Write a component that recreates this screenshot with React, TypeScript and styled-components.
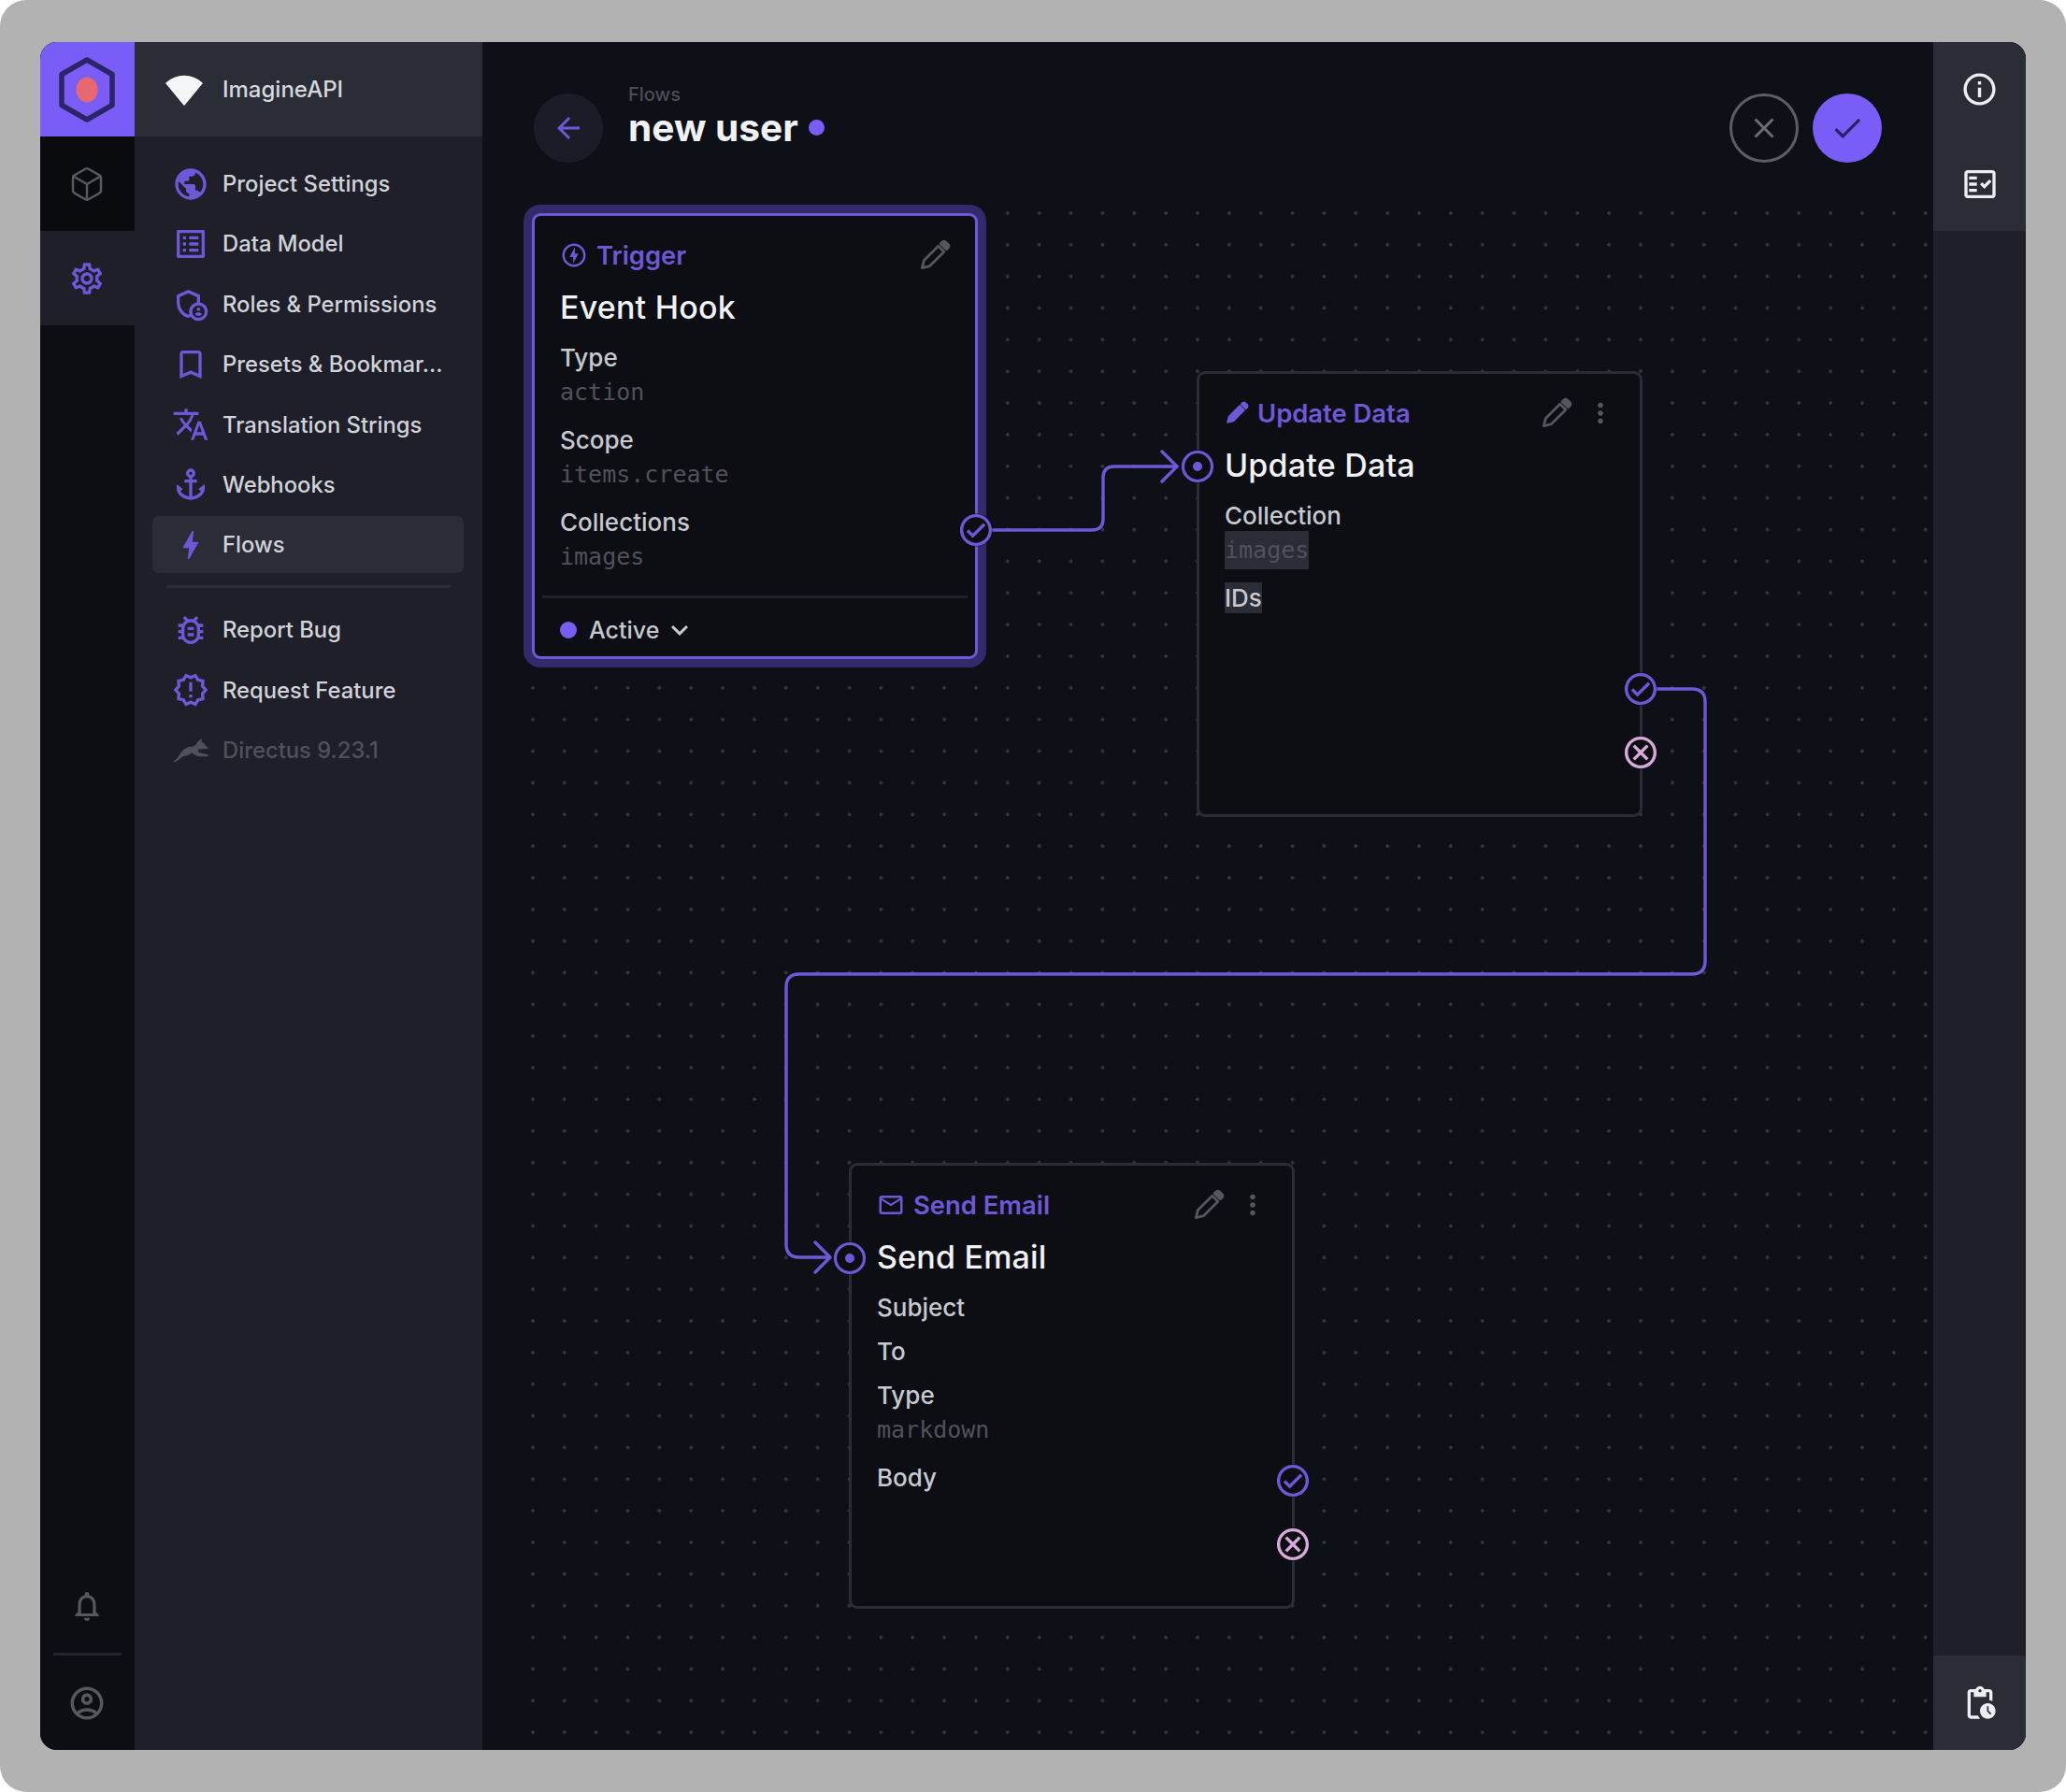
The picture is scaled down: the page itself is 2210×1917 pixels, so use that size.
import React from 'react'
import styled, { createGlobalStyle } from 'styled-components'
import {
  MdPublic,
  MdListAlt,
  MdOutlineAdminPanelSettings,
  MdOutlineBookmarkBorder,
  MdTranslate,
  MdAnchor,
  MdBolt,
  MdOutlineBugReport,
  MdOutlineNewReleases,
  MdOutlineSettings,
  MdOutlineNotifications,
  MdOutlineAccountCircle,
  MdArrowBack,
  MdClose,
  MdCheck,
  MdInfoOutline,
  MdOutlineFactCheck,
  MdOutlinePendingActions,
  MdMoreVert,
  MdOutlineEmail,
  MdOutlineOfflineBolt,
  MdKeyboardArrowDown,
  MdOutlineCheckCircle,
  MdOutlineCancel,
} from 'react-icons/md'
import { Box } from 'lucide-react'

const PURPLE = '#6f58d8'
const BRIGHT = '#7a5cf6'
const PANEL = '#1e1f29'
const RAISED = '#2a2c36'
const CANVAS = '#0d1017'
const CARD = '#0c0e14'

const GlobalStyle = createGlobalStyle`
  html, body { margin: 0; padding: 0; background: #fff; }
  body { font-family: Inter, "Liberation Sans", sans-serif; }
  * { box-sizing: border-box; }
`

const Backdrop = styled.div`
  width: 2210px;
  height: 1917px;
  padding: 45px 43px 45px 43px;
  background: #b2b2b2;
  border-radius: 28px;
`

const Frame = styled.div`
  display: flex;
  height: 100%;
  border-radius: 18px;
  overflow: hidden;
  background: ${CANVAS};
`

const Rail = styled.div`
  width: 101px;
  flex: none;
  display: flex;
  flex-direction: column;
  background: #0c0e13;
`

const LogoTile = styled.div`
  height: 101px;
  display: flex;
  align-items: center;
  justify-content: center;
  padding-right: 2px;
  background: ${BRIGHT};
`

const RailItem = styled.div<{ $active?: boolean; $dim?: boolean }>`
  height: 101px;
  display: flex;
  align-items: center;
  justify-content: center;
  padding-right: 2px;
  background: ${(p) => (p.$active ? PANEL : p.$dim ? '#090b0f' : 'transparent')};
  color: ${(p) => (p.$active ? PURPLE : '#56585f')};
  svg { display: block; }
`

const RailSpacer = styled.div`
  flex: 1;
`

const RailRule = styled.div`
  height: 3px;
  margin: 0 14px;
  background: #23252e;
`

const Sidebar = styled.div`
  width: 372px;
  flex: none;
  background: ${PANEL};
`

const ProjectBar = styled.div`
  height: 101px;
  display: flex;
  align-items: center;
  gap: 21px;
  padding-left: 33px;
  background: ${RAISED};
  color: #d5d8df;
  font-size: 24px;
  font-weight: 500;
`

const NavList = styled.div`
  display: flex;
  flex-direction: column;
  gap: 3.4px;
  padding: 20px 20px 0 19px;
`

const NavItem = styled.div<{ $active?: boolean; $muted?: boolean }>`
  height: 61px;
  display: flex;
  align-items: center;
  gap: 14px;
  padding-left: 21px;
  border-radius: 7px;
  background: ${(p) => (p.$active ? RAISED : 'transparent')};
  color: ${(p) => (p.$muted ? '#4f515a' : '#d0d3da')};
  font-size: 23.8px;
  font-weight: 500;
  white-space: nowrap;
  svg { flex: none; width: 40px; height: 40px; color: ${(p) => (p.$muted ? '#4f515a' : PURPLE)}; }
`

const NavRule = styled.div`
  height: 3px;
  margin: 9px 14px 11px 15px;
  background: ${RAISED};
`

const Main = styled.div`
  flex: 1;
  min-width: 0;
  display: flex;
  flex-direction: column;
`

const Header = styled.div`
  height: 160px;
  flex: none;
  display: flex;
  align-items: flex-start;
  padding: 55px 55px 0;
`

const BackButton = styled.div`
  width: 74px;
  height: 74px;
  border-radius: 50%;
  display: flex;
  align-items: center;
  justify-content: center;
  background: #1b1c28;
  color: ${PURPLE};
`

const TitleBlock = styled.div`
  margin: -11px 0 0 27px;
  flex: 1;
`

const Crumb = styled.div`
  height: 24px;
  line-height: 24px;
  font-size: 20px;
  font-weight: 500;
  color: #4b4d56;
`

const Title = styled.div`
  height: 46px;
  display: flex;
  align-items: center;
  gap: 11px;
  font-size: 40.6px;
  font-weight: 700;
  color: #f1f2f5;
`

const TitleDot = styled.span`
  width: 17px;
  height: 17px;
  border-radius: 50%;
  background: ${BRIGHT};
`

const RoundButton = styled.div<{ $primary?: boolean }>`
  width: 74px;
  height: 74px;
  margin-left: 15px;
  border-radius: 50%;
  display: flex;
  align-items: center;
  justify-content: center;
  border: ${(p) => (p.$primary ? 'none' : '3px solid #5c5e66')};
  background: ${(p) => (p.$primary ? BRIGHT : 'transparent')};
  color: ${(p) => (p.$primary ? '#2a2260' : '#6b6d75')};
`

const Canvas = styled.div`
  position: relative;
  flex: 1;
  margin-left: 40px;
  background-image: radial-gradient(circle, #363841 1.5px, transparent 2px);
  background-size: 33.87px 33.87px;
  background-position: -3px 6px;
`

const Wires = styled.svg`
  position: absolute;
  left: 0;
  top: 0;
  width: 100%;
  height: 100%;
  overflow: visible;
  fill: none;
  stroke: ${PURPLE};
  stroke-width: 3.4;
  stroke-linecap: round;
  stroke-linejoin: round;
`

const Node = styled.div<{ $x: number; $y: number; $selected?: boolean }>`
  position: absolute;
  left: ${(p) => p.$x}px;
  top: ${(p) => p.$y}px;
  width: 477px;
  height: 477px;
  display: flex;
  flex-direction: column;
  padding: 8px 0 0;
  border: 3px solid ${(p) => (p.$selected ? PURPLE : RAISED)};
  border-radius: 9px;
  background: ${CARD};
  box-shadow: ${(p) => (p.$selected ? '0 0 0 9px #322a6b' : 'none')};
`

const NodeHead = styled.div`
  height: 68px;
  flex: none;
  display: flex;
  align-items: center;
  padding: 0 18px 0 27px;
`

const NodeKind = styled.div`
  flex: 1;
  display: flex;
  align-items: center;
  gap: 9px;
  color: ${PURPLE};
  font-size: 27.4px;
  font-weight: 600;
`

const HeadAction = styled.div<{ $nudge?: number }>`
  width: 48px;
  height: 48px;
  margin-right: ${(p) => p.$nudge || 0}px;
  display: flex;
  align-items: center;
  justify-content: center;
  color: #55575f;
`

const NodeName = styled.div`
  height: 44px;
  line-height: 44px;
  margin-bottom: 15px;
  padding-left: 27px;
  color: #f1f2f5;
  font-size: 34px;
  font-weight: 500;
  letter-spacing: 0.2px;
`

const Fields = styled.div`
  display: flex;
  flex-direction: column;
  gap: 14px;
  padding-left: 27px;
  align-items: flex-start;
`

const Field = styled.div`
  display: flex;
  flex-direction: column;
  align-items: flex-start;
`

const Label = styled.div<{ $shaded?: boolean }>`
  height: 33px;
  line-height: 33px;
  color: #c6c9d0;
  font-size: 26px;
  font-weight: 500;
  background: ${(p) => (p.$shaded ? RAISED : 'transparent')};
`

const Value = styled.div<{ $shaded?: boolean }>`
  height: 41px;
  line-height: 41px;
  color: #50525b;
  font-family: "DejaVu Sans Mono", "Liberation Mono", monospace;
  font-size: 25px;
  background: ${(p) => (p.$shaded ? RAISED : 'transparent')};
`

const StatusBar = styled.div`
  margin: auto 8px 0;
  height: 65px;
  display: flex;
  align-items: center;
  gap: 4px;
  padding: 6px 0 0 19px;
  border-top: 3px solid #1f2029;
  color: #c6c9d0;
  font-size: 25px;
  font-weight: 500;
`

const StatusDot = styled.span`
  width: 18px;
  height: 18px;
  margin-right: 9px;
  border-radius: 50%;
  background: ${BRIGHT};
`

const Port = styled.div<{ $side: 'left' | 'right'; $top: number; $color?: string }>`
  position: absolute;
  left: ${(p) => (p.$side === 'left' ? '-2px' : 'calc(100% + 1px)')};
  top: ${(p) => p.$top}px;
  transform: translate(-50%, -50%);
  width: 35px;
  height: 35px;
  display: flex;
  align-items: center;
  justify-content: center;
  border-radius: 50%;
  background: ${CARD};
  color: ${(p) => p.$color || PURPLE};
  svg { flex: none; }
`

const Aside = styled.div`
  width: 99px;
  flex: none;
  display: flex;
  flex-direction: column;
  background: ${PANEL};
`

const AsideItem = styled.div`
  height: 101px;
  display: flex;
  align-items: center;
  justify-content: center;
  background: ${RAISED};
  color: #eceef2;
`

const AsideSpacer = styled.div`
  flex: 1;
`

function Logo() {
  return (
    <svg width="66" height="72" viewBox="0 0 66 72">
      <path
        d="M33 4 L60 19.5 V52.5 L33 68 L6 52.5 V19.5 Z"
        fill="none"
        stroke="#2c2468"
        strokeWidth="5.5"
        strokeLinejoin="round"
      />
      <ellipse cx="33" cy="36" rx="11.5" ry="13.5" fill="#e8686f" />
    </svg>
  )
}

function WifiMark() {
  return (
    <svg width="40" height="34" viewBox="0 0 40 34">
      <path d="M1 10 C12 0 28 0 39 10 L20 33 Z" fill="#f4f5f7" stroke="#f4f5f7" strokeWidth="1.5" strokeLinejoin="round" />
    </svg>
  )
}

function Pencil({ solid, size = 35 }: { solid?: boolean; size?: number }) {
  return (
    <svg width={size} height={size} viewBox="0 0 24 24" fill={solid ? 'currentColor' : 'none'} stroke="currentColor" strokeWidth="1.9" strokeLinejoin="round">
      <path d="M3 21 L4.4 15.4 L14.9 4.9 L19.1 9.1 L8.6 19.6 Z" />
      <path d="M16.6 3.2 L18 1.8 A1.4 1.4 0 0 1 20 1.8 L22.2 4 A1.4 1.4 0 0 1 22.2 6 L20.8 7.4 Z" fill="currentColor" />
    </svg>
  )
}

function InputRing() {
  return (
    <svg width="35" height="35" viewBox="0 0 35 35" fill="none">
      <circle cx="17.5" cy="17.5" r="15.5" stroke="currentColor" strokeWidth="3.2" />
      <circle cx="17.5" cy="17.5" r="5" fill="currentColor" />
    </svg>
  )
}

function Rabbit() {
  return (
    <svg viewBox="0 0 42 30" style={{ width: 40, height: 29 }}>
      <path
        d="M1 29 C5 26 8 21 10 18 C13 13 18 11 23 11 L27 9 C28 6 30 4 34 2 L33 6 C35 6 37 8 38 10 L41 13 L34 14 L30 14 C29 16 29 17 31 18 L41 20 L40 22 L29 22 C26 21 24 19 22 18 C19 21 15 22 12 22 C9 25 5 28 1 29 Z"
        fill="currentColor"
      />
    </svg>
  )
}

const navTop = [
  { label: 'Project Settings', icon: <MdPublic /> },
  { label: 'Data Model', icon: <MdListAlt /> },
  { label: 'Roles & Permissions', icon: <MdOutlineAdminPanelSettings /> },
  { label: 'Presets & Bookmar...', icon: <MdOutlineBookmarkBorder /> },
  { label: 'Translation Strings', icon: <MdTranslate /> },
  { label: 'Webhooks', icon: <MdAnchor /> },
]

export default function App() {
  return (
    <>
      <GlobalStyle />
      <Backdrop>
        <Frame>
          <Rail>
            <LogoTile>
              <Logo />
            </LogoTile>
            <RailItem $dim>
              <Box size={40} strokeWidth={1.5} />
            </RailItem>
            <RailItem $active>
              <MdOutlineSettings size={40} />
            </RailItem>
            <RailSpacer />
            <RailItem>
              <MdOutlineNotifications size={38} />
            </RailItem>
            <RailRule />
            <RailItem>
              <MdOutlineAccountCircle size={42} />
            </RailItem>
          </Rail>

          <Sidebar>
            <ProjectBar>
              <WifiMark />
              ImagineAPI
            </ProjectBar>
            <NavList>
              {navTop.map((item) => (
                <NavItem key={item.label}>
                  {item.icon}
                  {item.label}
                </NavItem>
              ))}
              <NavItem $active>
                <MdBolt />
                Flows
              </NavItem>
              <NavRule />
              <NavItem>
                <MdOutlineBugReport />
                Report Bug
              </NavItem>
              <NavItem>
                <MdOutlineNewReleases />
                Request Feature
              </NavItem>
              <NavItem $muted>
                <Rabbit />
                Directus 9.23.1
              </NavItem>
            </NavList>
          </Sidebar>

          <Main>
            <Header>
              <BackButton>
                <MdArrowBack size={36} />
              </BackButton>
              <TitleBlock>
                <Crumb>Flows</Crumb>
                <Title>
                  new user
                  <TitleDot />
                </Title>
              </TitleBlock>
              <RoundButton>
                <MdClose size={36} />
              </RoundButton>
              <RoundButton $primary>
                <MdCheck size={38} />
              </RoundButton>
            </Header>

            <Canvas>
              <Wires>
                <g transform="translate(-556 -205)">
                  <path d="M1044 567 H1168 Q1180 567 1180 555 V511 Q1180 499 1192 499 H1259" />
                  <path d="M1243 483 L1259 499 L1243 515" />
                  <path d="M1756 737 H1810 Q1824 737 1824 751 V1028 Q1824 1042 1810 1042 H855 Q841 1042 841 1056 V1331 Q841 1345 855 1345 H886" />
                  <path d="M872 1329 L888 1345 L872 1361" />
                </g>
              </Wires>

              <Node $x={13} $y={23} $selected>
                <NodeHead>
                  <NodeKind>
                    <MdOutlineOfflineBolt size={30} />
                    Trigger
                  </NodeKind>
                  <HeadAction $nudge={2}>
                    <Pencil />
                  </HeadAction>
                </NodeHead>
                <NodeName>Event Hook</NodeName>
                <Fields>
                  <Field>
                    <Label>Type</Label>
                    <Value>action</Value>
                  </Field>
                  <Field>
                    <Label>Scope</Label>
                    <Value>items.create</Value>
                  </Field>
                  <Field>
                    <Label>Collections</Label>
                    <Value>images</Value>
                  </Field>
                </Fields>
                <StatusBar>
                  <StatusDot />
                  Active
                  <MdKeyboardArrowDown size={36} color="#c6c9d0" />
                </StatusBar>
                <Port $side="right" $top={336}>
                  <MdOutlineCheckCircle size={41} />
                </Port>
              </Node>

              <Node $x={724} $y={192}>
                <NodeHead>
                  <NodeKind>
                    <Pencil solid size={26} />
                    Update Data
                  </NodeKind>
                  <HeadAction>
                    <Pencil />
                  </HeadAction>
                  <HeadAction>
                    <MdMoreVert size={34} />
                  </HeadAction>
                </NodeHead>
                <NodeName>Update Data</NodeName>
                <Fields>
                  <Field>
                    <Label>Collection</Label>
                    <Value $shaded>images</Value>
                  </Field>
                  <Label $shaded>IDs</Label>
                </Fields>
                <Port $side="left" $top={99}>
                  <InputRing />
                </Port>
                <Port $side="right" $top={337}>
                  <MdOutlineCheckCircle size={41} />
                </Port>
                <Port $side="right" $top={405} $color="#d9a9d9">
                  <MdOutlineCancel size={41} />
                </Port>
              </Node>

              <Node $x={352} $y={1039}>
                <NodeHead>
                  <NodeKind>
                    <MdOutlineEmail size={30} />
                    Send Email
                  </NodeKind>
                  <HeadAction>
                    <Pencil />
                  </HeadAction>
                  <HeadAction>
                    <MdMoreVert size={34} />
                  </HeadAction>
                </NodeHead>
                <NodeName>Send Email</NodeName>
                <Fields>
                  <Label>Subject</Label>
                  <Label>To</Label>
                  <Field>
                    <Label>Type</Label>
                    <Value>markdown</Value>
                  </Field>
                  <Label>Body</Label>
                </Fields>
                <Port $side="left" $top={99}>
                  <InputRing />
                </Port>
                <Port $side="right" $top={337}>
                  <MdOutlineCheckCircle size={41} />
                </Port>
                <Port $side="right" $top={405} $color="#d9a9d9">
                  <MdOutlineCancel size={41} />
                </Port>
              </Node>
            </Canvas>
          </Main>

          <Aside>
            <AsideItem>
              <MdInfoOutline size={41} />
            </AsideItem>
            <AsideItem>
              <MdOutlineFactCheck size={40} />
            </AsideItem>
            <AsideSpacer />
            <AsideItem>
              <MdOutlinePendingActions size={40} />
            </AsideItem>
          </Aside>
        </Frame>
      </Backdrop>
    </>
  )
}
